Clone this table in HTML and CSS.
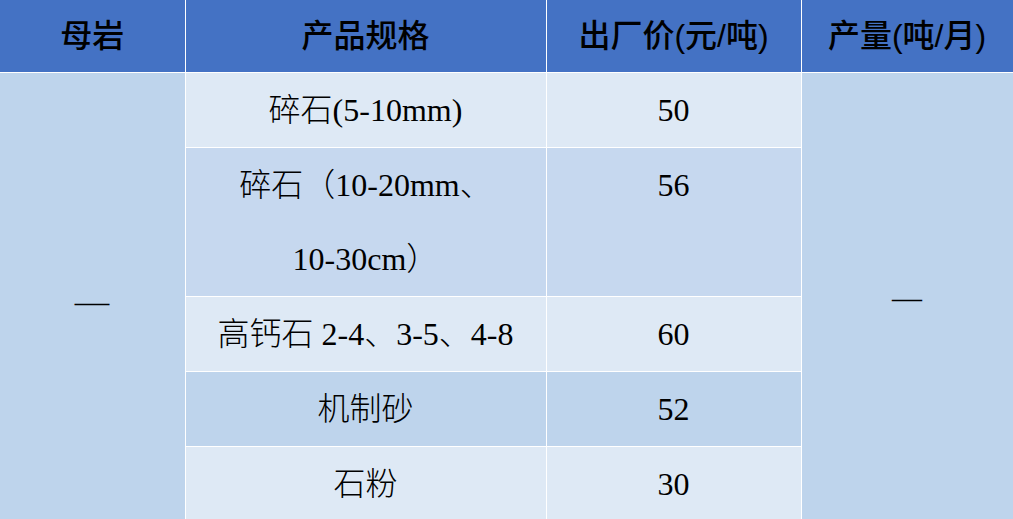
FILE: index.html
```html
<!DOCTYPE html>
<html lang="zh">
<head>
<meta charset="utf-8">
<title>产品价格</title>
<link rel="stylesheet" href="styles.css">
</head>
<body>
<table class="price">
  <colgroup>
    <col class="c1"><col class="c2"><col class="c3"><col class="c4">
  </colgroup>
  <thead>
    <tr class="head">
      <th>母岩</th>
      <th>产品规格</th>
      <th>出厂价(元/吨)</th>
      <th>产量(吨/月)</th>
    </tr>
  </thead>
  <tbody>
    <tr class="light">
      <td class="side" rowspan="5"><span class="dash dash-left">—</span></td>
      <td>碎石(5-10mm)</td>
      <td>50</td>
      <td class="side" rowspan="5"><span class="dash">—</span></td>
    </tr>
    <tr class="mid">
      <td>碎石（10-20mm、<br>10-30cm）</td>
      <td class="top">56</td>
    </tr>
    <tr class="light">
      <td>高钙石 2-4、3-5、4-8</td>
      <td>60</td>
    </tr>
    <tr class="dark">
      <td>机制砂</td>
      <td>52</td>
    </tr>
    <tr class="light">
      <td>石粉</td>
      <td>30</td>
    </tr>
  </tbody>
</table>
</body>
</html>
```

FILE: styles.css
```css
html, body {
  margin: 0;
  padding: 0;
  background: #dfe9f5;
  overflow: hidden;
}

.price {
  width: 1013px;
  border-collapse: collapse;
  table-layout: fixed;
  font-family: "Liberation Serif", "Noto Sans CJK SC", serif;
  color: #000;
}

.c1 { width: 185px; }
.c2 { width: 361px; }
.c3 { width: 255px; }
.c4 { width: 212px; }

.price th,
.price td {
  border: 1px solid #ffffff;
  padding: 0;
  text-align: center;
}

.price tr:first-child th { border-top: none; }
.price th:first-child, .price td.side:first-child { border-left: none; }

.head th {
  height: 72px;
  background: #4472c4;
  font-family: "Liberation Sans", "Noto Sans CJK SC", sans-serif;
  font-size: 32px;
  font-weight: 500;
  line-height: 72px;
  vertical-align: middle;
}

.price td {
  font-size: 32px;
  font-weight: 300;
  line-height: 74px;
  vertical-align: middle;
}

.price td.top { vertical-align: top; }

.light td { background: #dee9f5; }
.mid td { background: #c6d8ef; }
.dark td { background: #bed4ec; }

.price td.side {
  background: #bed4ec;
  vertical-align: middle;
}

.dash {
  display: inline-block;
  font-family: "Liberation Serif", serif;
  font-size: 30px;
  font-weight: 400;
  line-height: 30px;
}

.dash-left {
  transform: scaleX(1.15);
  position: relative;
  top: 4px;
}
```
